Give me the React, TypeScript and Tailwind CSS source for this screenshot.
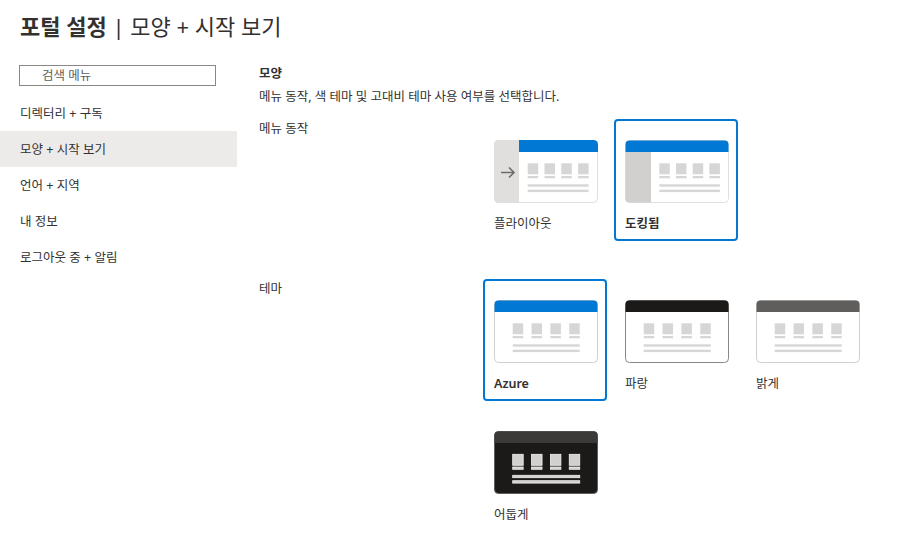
import React from "react";

const FONT = { fontFamily: '"Noto Sans", "Noto Sans CJK KR", sans-serif' };

function Grid({ x0, step, fill, stroke }: { x0: number; step: number; fill: string; stroke?: string }) {
  const xs = [0, 1, 2, 3].map((i) => x0 + i * step);
  const end = xs[3] + 10.5;
  const s = stroke ? { stroke, strokeWidth: 0.8 } : {};
  return (
    <g>
      {xs.map((x) => (
        <g key={x}>
          <rect x={x} y={23.3} width={10.5} height={11} fill={fill} {...s} />
          <rect x={x} y={36} width={10.5} height={2.3} fill={fill} {...s} />
        </g>
      ))}
      <rect x={x0} y={44.3} width={end - x0} height={2.4} fill={fill} {...s} />
      <rect x={x0} y={49.7} width={end - x0} height={2.4} fill={fill} {...s} />
    </g>
  );
}

function ThemeIllus({ bar, border, bg = "#ffffff", sq = "#d6d6d6", sqStroke }: { bar: string; border: string; bg?: string; sq?: string; sqStroke?: string }) {
  return (
    <svg width="104" height="63" viewBox="0 0 104 63" className="block">
      <rect x="0.5" y="0.5" width="103" height="62" rx="4" fill={bg} stroke={border} />
      <path d="M0.5 12 V4.5 A4 4 0 0 1 4.5 0.5 H99.5 A4 4 0 0 1 103.5 4.5 V12 Z" fill={bar} />
      <Grid x0={18.7} step={18.85} fill={sq} stroke={sqStroke} />
    </svg>
  );
}

function FlyoutIllus() {
  return (
    <svg width="104" height="63" viewBox="0 0 104 63" className="block">
      <rect x="0.5" y="0.5" width="103" height="62" rx="4" fill="#ffffff" stroke="#e1dfdd" />
      <path d="M0 4.5 A4.5 4.5 0 0 1 4.5 0 H25 V63 H4.5 A4.5 4.5 0 0 1 0 58.5 Z" fill="#e1dfdd" />
      <path d="M25 0 H99.5 A4.5 4.5 0 0 1 104 4.5 V12 H25 Z" fill="#0078d4" />
      <path d="M7 32.5 H20 M15 27.5 L20 32.5 L15 37.5" stroke="#6e6c6a" strokeWidth="1.6" fill="none" />
      <Grid x0={33.7} step={16.8} fill="#d6d6d6" />
    </svg>
  );
}

function DockedIllus() {
  return (
    <svg width="104" height="63" viewBox="0 0 104 63" className="block">
      <rect x="0.5" y="0.5" width="103" height="62" rx="4" fill="#ffffff" stroke="#e1dfdd" />
      <path d="M0.5 12 H26 V62.5 H4.5 A4 4 0 0 1 0.5 58.5 Z" fill="#d2d0ce" />
      <path d="M0.5 12 V4.5 A4 4 0 0 1 4.5 0.5 H99.5 A4 4 0 0 1 103.5 4.5 V12 Z" fill="#0078d4" />
      <Grid x0={34.3} step={16.7} fill="#d6d6d6" />
    </svg>
  );
}

function Card({ selected, label, bold, children }: { selected?: boolean; label: string; bold?: boolean; children: React.ReactNode }) {
  return (
    <div
      className={
        "w-[124px] h-[122px] rounded-[4px] border-2 pt-[19px] px-[9px] " +
        (selected ? "border-[#0078d4]" : "border-transparent")
      }
    >
      {children}
      <div className={"mt-[13px] text-[12.5px] leading-[16px] text-[#323130] " + (bold ? "font-semibold" : "")}>{label}</div>
    </div>
  );
}

export default function App() {
  const nav = ["디렉터리 + 구독", "모양 + 시작 보기", "언어 + 지역", "내 정보", "로그아웃 중 + 알림"];
  return (
    <div className="w-[915px] h-[540px] bg-white text-[#323130] overflow-hidden" style={FONT}>
      <div className="h-[65px] pl-[20px] pt-[11px]">
        <h1 className="text-[22px] leading-[30px] text-[#323130]">
          <span className="font-bold">포털 설정</span>
          <span> | 모양 + 시작 보기</span>
        </h1>
      </div>
      <div className="flex">
        <div className="w-[237px] shrink-0">
          <div className="ml-[19px] w-[197px] h-[21px] border border-[#8a8886] pl-[22px] text-[12.5px] leading-[19px] text-[#605e5c]">
            검색 메뉴
          </div>
          <div className="mt-[9px]">
            {nav.map((n, i) => (
              <div
                key={n}
                className={
                  "h-[36px] flex items-center pl-[20px] pt-[2px] text-[12.5px] text-[#323130] " + (i === 1 ? "bg-[#edebe9]" : "")
                }
              >
                {n}
              </div>
            ))}
          </div>
        </div>
        <div className="pl-[22px] flex-1">
          <div className="pt-[1px] text-[12.5px] leading-[16px] font-bold">모양</div>
          <div className="mt-[7px] text-[12.5px] leading-[16px]">메뉴 동작, 색 테마 및 고대비 테마 사용 여부를 선택합니다.</div>
          <div className="mt-[14px] flex">
            <div className="w-[224px] shrink-0 pt-[2px] text-[12.5px] leading-[16px]">메뉴 동작</div>
            <div className="grid grid-cols-[124px_124px_124px] gap-x-[7px] gap-y-[10px]">
              <Card label="플라이아웃">
                <FlyoutIllus />
              </Card>
              <Card label="도킹됨" selected bold>
                <DockedIllus />
              </Card>
            </div>
          </div>
          <div className="mt-[38px] flex">
            <div className="w-[224px] shrink-0 pt-[2px] text-[12.5px] leading-[16px]">테마</div>
            <div className="grid grid-cols-[124px_124px_124px] gap-x-[7px] gap-y-[9px]">
              <Card label="Azure" selected bold>
                <ThemeIllus bar="#0078d4" border="#d2d0ce" />
              </Card>
              <Card label="파랑">
                <ThemeIllus bar="#1b1a19" border="#8a8886" />
              </Card>
              <Card label="밝게">
                <ThemeIllus bar="#605e5c" border="#d2d0ce" />
              </Card>
              <Card label="어둡게">
                <ThemeIllus bar="#3b3a39" border="#605e5c" bg="#1b1a19" sq="#d2d0ce" sqStroke="#f3f2f1" />
              </Card>
            </div>
          </div>
        </div>
      </div>
    </div>
  );
}
